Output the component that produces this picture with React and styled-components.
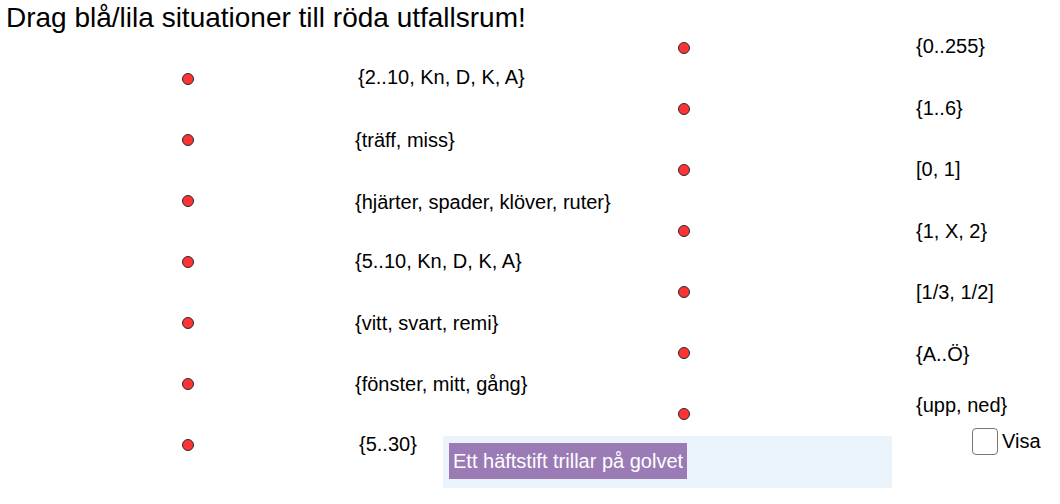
import React, { useState } from "react";
import styled, { createGlobalStyle } from "styled-components";

const GlobalStyle = createGlobalStyle`
  html, body {
    margin: 0;
    padding: 0;
    background: #ffffff;
  }
  body {
    font-family: "Liberation Sans", Arial, sans-serif;
    color: #000;
  }
`;

const Page = styled.div`
  position: relative;
  width: 1060px;
  height: 504px;
  overflow: hidden;
`;

const Title = styled.h1`
  margin: 0;
  padding: 4px 0 0 6px;
  height: 29px;
  font-size: 28px;
  font-weight: normal;
  line-height: 28px;
`;

const Board = styled.div`
  display: grid;
  grid-template-columns: 678px 1fr;
`;

const Column = styled.div`
  display: flex;
  flex-direction: column;
  gap: 31px;
  padding-top: ${(props) => props.top}px;
  padding-left: ${(props) => props.left}px;
`;

const Row = styled.div`
  display: flex;
  align-items: center;
  height: 30px;
`;

const Dot = styled.span`
  flex: none;
  width: 10px;
  height: 10px;
  border-radius: 50%;
  background: #f33;
  border: 1px solid #2a2a2a;
`;

const Label = styled.span`
  margin-left: ${(props) => props.gap + (props.dx || 0)}px;
  position: relative;
  top: ${(props) => props.dy || 0}px;
  font-size: 20px;
  line-height: 24px;
  white-space: nowrap;
`;

const Tray = styled.div`
  position: absolute;
  left: 443px;
  top: 436px;
  width: 449px;
  height: 52px;
  background: #ebf4fb;
  box-sizing: border-box;
  padding: 7px 6px;
`;

const Card = styled.div`
  display: inline-block;
  background: #9a7bb6;
  color: #fff;
  font-size: 20px;
  line-height: 36px;
  padding: 0 4px;
  height: 36px;
  cursor: grab;
`;

const Toggle = styled.label`
  position: absolute;
  left: 972px;
  top: 428px;
  display: flex;
  align-items: center;
  gap: 4px;
  font-size: 20px;
  cursor: pointer;
`;

const Box = styled.span`
  width: 24px;
  height: 25px;
  border: 1.5px solid #777;
  border-radius: 4px;
  background: ${(props) => (props.checked ? "#6a5acd" : "#fff")};
`;

const left = [
  { text: "{2..10, Kn, D, K, A}", dx: 3, dy: -2 },
  { text: "{träff, miss}" },
  { text: "{hjärter, spader, klöver, ruter}", dy: 1 },
  { text: "{5..10, Kn, D, K, A}", dy: -1 },
  { text: "{vitt, svart, remi}" },
  { text: "{fönster, mitt, gång}" },
  { text: "{5..30}", dx: 4, dy: -1 },
];

const right = [
  { text: "{0..255}", dy: -2 },
  { text: "{1..6}", dy: -1 },
  { text: "[0, 1]", dy: -1 },
  { text: "{1, X, 2}" },
  { text: "[1/3, 1/2]" },
  { text: "{A..Ö}", dy: 1 },
  { text: "{upp, ned}", dy: -9 },
];

export default function App() {
  const [show, setShow] = useState(false);

  return (
    <Page>
      <GlobalStyle />
      <Title>Drag blå/lila situationer till röda utfallsrum!</Title>
      <Board>
        <Column top={31} left={182}>
          {left.map((item) => (
            <Row key={item.text}>
              <Dot />
              <Label gap={161} dx={item.dx} dy={item.dy}>
                {item.text}
              </Label>
            </Row>
          ))}
        </Column>
        <Column top={0} left={0}>
          {right.map((item) => (
            <Row key={item.text}>
              <Dot />
              <Label gap={226} dx={item.dx} dy={item.dy}>
                {item.text}
              </Label>
            </Row>
          ))}
        </Column>
      </Board>
      <Tray>
        <Card>Ett häftstift trillar på golvet</Card>
      </Tray>
      <Toggle onClick={() => setShow(!show)}>
        <Box checked={show} />
        Visa
      </Toggle>
    </Page>
  );
}
